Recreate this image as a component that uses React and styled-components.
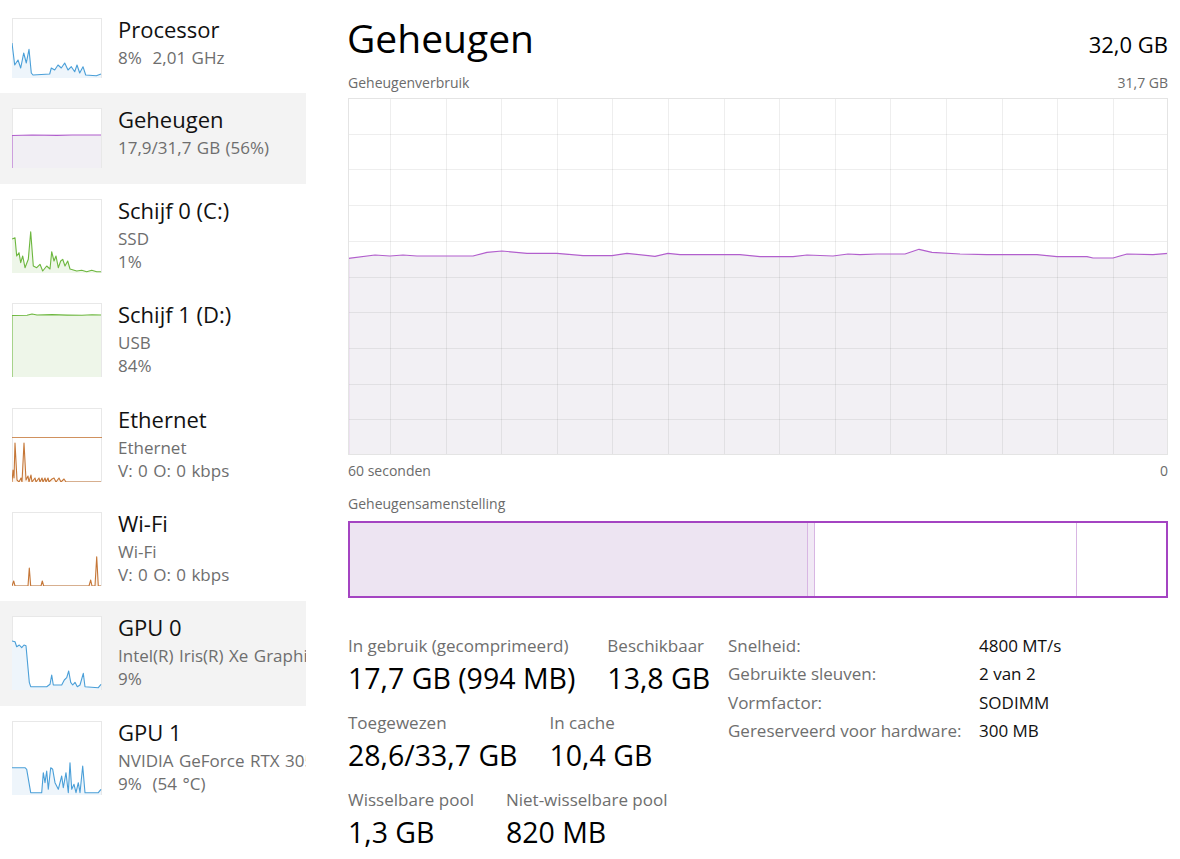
import React from 'react';
import styled, { createGlobalStyle } from 'styled-components';

const GlobalStyle = createGlobalStyle`
  html, body { margin: 0; padding: 0; background: #fff; }
  body { font-family: "Open Sans", "Noto Sans", sans-serif; color: #1a1a1a; }
  * { box-sizing: border-box; }
`;

const Page = styled.div`
  display: flex;
  width: 1180px;
  height: 859px;
  overflow: hidden;
  background: #fff;
`;

const Sidebar = styled.nav`
  width: 306px;
  flex: none;
  padding-top: 3px;
  overflow: hidden;
`;

const NavRow = styled.div`
  display: flex;
  align-items: flex-start;
  gap: 16px;
  padding: 10px 0 15.4px 12px;
  background: ${(p) => (p.$selected ? '#f3f3f3' : 'transparent')};
  white-space: nowrap;
`;

const Thumb = styled.svg`
  flex: none;
  display: block;
  margin-top: 5px;
  background: #fff;
`;

const NavText = styled.div`
  display: flex;
  flex-direction: column;
  min-width: 0;
`;

const NavTitle = styled.div`
  font-size: 22px;
  line-height: 33px;
  color: #111;
`;

const NavSub = styled.div`
  font-size: 17px;
  line-height: 23px;
  color: #6e6e6e;
  white-space: pre;
  word-spacing: 1px;
`;

const Main = styled.main`
  flex: 1;
  min-width: 0;
  padding: 14px 12px 0 42px;
  display: flex;
  flex-direction: column;
`;

const Header = styled.header`
  display: flex;
  justify-content: space-between;
  align-items: baseline;
  height: 48px;
`;

const PageTitle = styled.h1`
  margin: 0 0 0 -1px;
  font-size: 39px;
  line-height: 48px;
  font-weight: 400;
  color: #000;
`;

const Capacity = styled.div`
  font-size: 22px;
  color: #000;
`;

const CaptionRow = styled.div`
  display: flex;
  justify-content: space-between;
  font-size: 14px;
  line-height: 20px;
  color: #6b6b6b;
  margin-top: ${(p) => p.$mt || 0}px;
`;

const ChartSvg = styled.svg`
  display: block;
  margin-top: 5px;
  width: 820px;
  height: 357px;
`;

const CompBar = styled.div`
  display: flex;
  height: 77px;
  margin-top: 7px;
  border: 2px solid #a444c2;
`;

const CompSegment = styled.div`
  flex: ${(p) => (p.$grow ? '1 1 auto' : `0 0 ${p.$w}px`)};
  background: ${(p) => p.$fill};
  border-right: ${(p) => (p.$divider ? '1px solid #d8b6e3' : 'none')};
`;

const StatsArea = styled.section`
  display: flex;
  align-items: flex-start;
  margin-top: 34px;
`;

const LeftStats = styled.div`
  width: 380px;
  flex: none;
  padding-top: 2px;
  display: flex;
  flex-direction: column;
  gap: 15px;
`;

const StatRow = styled.div`
  display: flex;
  gap: 32px;
`;

const StatItem = styled.div`
  display: flex;
  flex-direction: column;
  white-space: nowrap;
`;

const StatLabel = styled.div`
  font-size: 17px;
  line-height: 24px;
  color: #6e6e6e;
`;

const StatValue = styled.div`
  font-size: 28.5px;
  line-height: 36px;
  margin-top: 2px;
  color: #000;
`;

const InfoGrid = styled.dl`
  margin: 0;
  display: grid;
  grid-template-columns: 251px auto;
  align-content: start;
  font-size: 17px;
  line-height: 28.4px;
  white-space: nowrap;
`;

const InfoLabel = styled.dt`
  color: #6e6e6e;
`;

const InfoValue = styled.dd`
  margin: 0;
  color: #111;
`;

const BLUE = { line: '#4a9fd8', fill: '#eef5fb' };
const PURPLE = { line: '#b05dcc', fill: '#f1eff4' };
const GREEN = { line: '#6db73f', fill: '#eef6e9' };
const ORANGE = { line: '#c57637', fill: '#fbf3ec' };

const navItems = [
  {
    title: 'Processor',
    subs: ['8%  2,01 GHz'],
    h: 60,
    c: BLUE,
    pts: [[0,25],[2.7,47],[6,42],[8.7,50],[11.7,35],[14.3,45],[17,31.3],[19.3,55],[21,57],[37.7,56],[39.3,50],[42.7,52],[46,47],[49.3,50],[52.7,45],[56,52],[59.3,48.7],[62.7,53.7],[65,47],[67.7,55],[71,48.7],[73.7,57],[84.3,57.7],[89,56]],
  },
  {
    title: 'Geheugen',
    subs: ['17,9/31,7 GB (56%)'],
    h: 60,
    c: PURPLE,
    selected: true,
    pts: [[0,60],[0,27.5],[20,27],[45,27.4],[60,27],[89,27]],
  },
  {
    title: 'Schijf 0 (C:)',
    subs: ['SSD', '1%'],
    h: 74,
    c: GREEN,
    pts: [[0,40],[3,38.7],[4.7,57],[7,53.7],[8.7,63.7],[10.7,57],[13,68.7],[16.3,60.3],[18.7,32.7],[21.3,67],[24.7,68.7],[28,65.3],[30.7,72],[34.7,67],[38,70],[39.7,52.7],[42,62],[44,57],[46.3,68.7],[48.7,62],[50.7,60.3],[53,67],[55.7,62],[58,70],[64.7,72],[69.7,71.3],[74.7,72.7],[79.7,71.3],[84.7,72.7],[89,72.7]],
  },
  {
    title: 'Schijf 1 (D:)',
    subs: ['USB', '84%'],
    h: 74,
    c: GREEN,
    pts: [[0,74],[0,12.5],[15,12.3],[20,11],[25,12],[40,11.6],[55,12.1],[70,12.3],[80,11.7],[89,12]],
  },
  {
    title: 'Ethernet',
    subs: ['Ethernet', 'V: 0 O: 0 kbps'],
    h: 74,
    c: ORANGE,
    scale: 29,
    pts: [[0,74],[1,62],[2,70],[3,35],[5,72],[7,74],[9,70],[10,74],[12,35],[14,72],[16,68],[17,74],[19,67],[20,74],[23,70],[24,74],[27,70],[28,74],[30,70],[31,74],[33,70],[34,74],[36,70],[37,74],[40,71],[42,70],[44,74],[47,70],[49,74],[52,71],[54,74],[89,74]],
  },
  {
    title: 'Wi-Fi',
    subs: ['Wi-Fi', 'V: 0 O: 0 kbps'],
    h: 74,
    c: ORANGE,
    pts: [[0,74],[1.7,69],[3,74],[16,74],[17.3,56],[18.7,74],[29,74],[30.3,69],[31.7,74],[77,74],[78.7,68],[80,74],[83,74],[84.7,44.7],[86.3,74],[89,74]],
  },
  {
    title: 'GPU 0',
    subs: ['Intel(R) Iris(R) Xe Graphics', '9%'],
    h: 74,
    c: BLUE,
    selected: true,
    pts: [[0,25],[3,25.7],[4.7,30.7],[7.3,29],[9.7,31.7],[12,29],[14,29.7],[17.3,66.3],[18.7,70.7],[34.7,70.7],[38,68.3],[39.7,59],[41.3,69],[49.7,69],[52.3,64],[54.7,61.7],[56.7,55],[58.7,66.3],[60.7,69],[63,66.3],[65.3,70.7],[68,69],[71.3,57.3],[73,70.7],[86.3,71.7],[89,68.3]],
  },
  {
    title: 'GPU 1',
    subs: ['NVIDIA GeForce RTX 3050 Laptop GPU', '9%  (54 °C)'],
    h: 74,
    c: BLUE,
    pts: [[0,46.7],[13,46.7],[14.7,48.3],[18.7,71.7],[29.7,71.7],[31.3,51.7],[33,61.7],[34.7,50],[36.3,68.3],[38.7,46.7],[40.7,48.3],[43,61.7],[46.3,68.3],[49.7,55],[51.3,66.7],[54,51.7],[56.3,71.7],[58,41.7],[59.7,68.3],[62,63.3],[64,71.7],[66.3,61.7],[68,71.7],[70.7,45],[73,71.7],[86.3,71.7],[89,68.3]],
  },
];

const toStr = (pts) => pts.map(([x, y]) => `${x},${y}`).join(' ');

function Sparkline({ h, c, pts, scale }) {
  const first = pts[0];
  const last = pts[pts.length - 1];
  const area = [[first[0], h], ...pts, [last[0], h]];
  return (
    <Thumb width="90" height={h} viewBox={`0 0 90 ${h}`}>
      <rect x="0.5" y="0.5" width="89" height={h - 1} fill="#fff" stroke="#e8e8e8" />
      <polygon points={toStr(area)} fill={c.fill} />
      {scale && <line x1="0" y1={scale + 0.5} x2="90" y2={scale + 0.5} stroke={c.line} strokeWidth="1" opacity="0.8" />}
      <polyline points={toStr(pts)} fill="none" stroke={c.line} strokeWidth="1.1" strokeLinejoin="round" />
    </Thumb>
  );
}

const memPts = [[0,160.3],[27,157],[42,158],[55,157],[69,158],[125,158],[139,154.3],[154,153],[179,155.3],[209,155.3],[235,157.7],[264,157.7],[279,155.3],[307,158.3],[320,155.3],[332,156.7],[392,156.7],[412,158.7],[445,158.7],[459,157],[485,158],[500,156],[512,156.7],[529,156],[557,156],[571,151.3],[584,154.3],[612,156],[639,156.7],[689,156.7],[709,158.7],[739,158.7],[745,160],[765,160],[779,156],[805,156.7],[820,155.3]];

function MemoryChart() {
  const W = 820;
  const H = 357;
  const vLines = Array.from({ length: 14 }, (_, k) => 42 + 55.6 * k);
  const hLines = Array.from({ length: 9 }, (_, k) => 35.7 * (k + 1));
  const area = [[0, H], ...memPts, [W, H]];
  return (
    <ChartSvg viewBox={`0 0 ${W} ${H}`}>
      <rect x="0" y="0" width={W} height={H} fill="#fff" />
      <polygon points={toStr(area)} fill="#f2f0f4" />
      {vLines.map((x) => (
        <line key={`v${x}`} x1={Math.round(x) + 0.5} y1="0" x2={Math.round(x) + 0.5} y2={H} stroke="rgba(0,0,0,0.065)" />
      ))}
      {hLines.map((y) => (
        <line key={`h${y}`} x1="0" y1={Math.round(y) + 0.5} x2={W} y2={Math.round(y) + 0.5} stroke="rgba(0,0,0,0.065)" />
      ))}
      <polyline points={toStr([[0.5, H], [0.5, memPts[0][1]], ...memPts.slice(1)])} fill="none" stroke="#b25fcd" strokeWidth="1.2" strokeLinejoin="round" />
      <rect x="0.5" y="0.5" width={W - 1} height={H - 1} fill="none" stroke="#e4e4e4" />
    </ChartSvg>
  );
}

const segments = [
  { w: 458, fill: '#ede4f2', divider: true },
  { w: 7, fill: '#f1e9f5', divider: true },
  { w: 262, fill: '#ffffff', divider: true },
  { grow: true, fill: '#ffffff' },
];

const statRows = [
  [
    { label: 'In gebruik (gecomprimeerd)', value: '17,7 GB (994 MB)' },
    { label: 'Beschikbaar', value: '13,8 GB' },
  ],
  [
    { label: 'Toegewezen', value: '28,6/33,7 GB' },
    { label: 'In cache', value: '10,4 GB' },
  ],
  [
    { label: 'Wisselbare pool', value: '1,3 GB' },
    { label: 'Niet-wisselbare pool', value: '820 MB' },
  ],
];

const info = [
  ['Snelheid:', '4800 MT/s'],
  ['Gebruikte sleuven:', '2 van 2'],
  ['Vormfactor:', 'SODIMM'],
  ['Gereserveerd voor hardware:', '300 MB'],
];

export default function App() {
  return (
    <>
      <GlobalStyle />
      <Page>
        <Sidebar>
          {navItems.map((it) => (
            <NavRow key={it.title} $selected={it.selected}>
              <Sparkline h={it.h} c={it.c} pts={it.pts} scale={it.scale} />
              <NavText>
                <NavTitle>{it.title}</NavTitle>
                {it.subs.map((s) => (
                  <NavSub key={s}>{s}</NavSub>
                ))}
              </NavText>
            </NavRow>
          ))}
        </Sidebar>
        <Main>
          <Header>
            <PageTitle>Geheugen</PageTitle>
            <Capacity>32,0 GB</Capacity>
          </Header>
          <CaptionRow $mt={11}>
            <span>Geheugenverbruik</span>
            <span>31,7 GB</span>
          </CaptionRow>
          <MemoryChart />
          <CaptionRow $mt={6}>
            <span>60 seconden</span>
            <span>0</span>
          </CaptionRow>
          <CaptionRow $mt={13}>
            <span>Geheugensamenstelling</span>
          </CaptionRow>
          <CompBar>
            {segments.map((s, i) => (
              <CompSegment key={i} $w={s.w} $grow={s.grow} $fill={s.fill} $divider={s.divider} />
            ))}
          </CompBar>
          <StatsArea>
            <LeftStats>
              {statRows.map((row, i) => (
                <StatRow key={i}>
                  {row.map((s) => (
                    <StatItem key={s.label}>
                      <StatLabel>{s.label}</StatLabel>
                      <StatValue>{s.value}</StatValue>
                    </StatItem>
                  ))}
                </StatRow>
              ))}
            </LeftStats>
            <InfoGrid>
              {info.map(([k, v]) => (
                <React.Fragment key={k}>
                  <InfoLabel>{k}</InfoLabel>
                  <InfoValue>{v}</InfoValue>
                </React.Fragment>
              ))}
            </InfoGrid>
          </StatsArea>
        </Main>
      </Page>
    </>
  );
}
